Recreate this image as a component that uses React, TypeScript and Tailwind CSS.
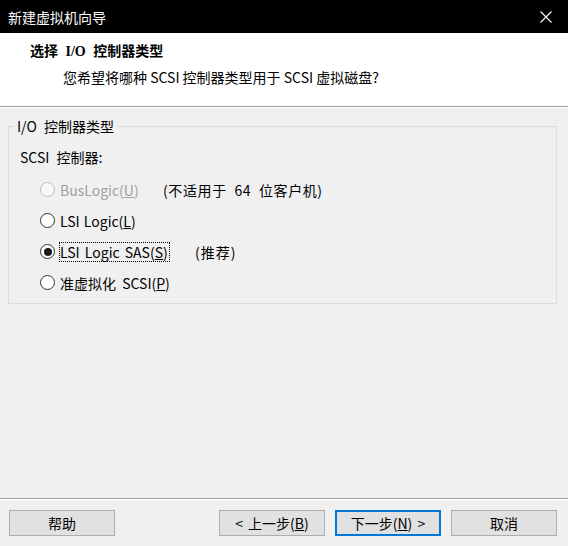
import React from "react";

const FONT = { fontFamily: '"Noto Sans CJK SC", sans-serif' };

function Radio({ checked, disabled }: { checked?: boolean; disabled?: boolean }) {
  return (
    <span
      className={
        "flex items-center justify-center w-[15px] h-[15px] rounded-full border shrink-0 " +
        (disabled ? "border-[#bcbcbc] bg-[#f7f7f7]" : "border-[#333333] bg-white")
      }
    >
      {checked && <span className="block w-[8px] h-[8px] rounded-full bg-[#1a1a1a]" />}
    </span>
  );
}

function Btn({ children, primary }: { children: React.ReactNode; primary?: boolean }) {
  return (
    <div
      className={
        "w-[106px] h-[26px] flex items-center justify-center bg-[#e1e1e1] text-[14px] leading-[20px] text-black [word-spacing:2px] " +
        (primary ? "border-2 border-[#0078d7]" : "border border-[#adadad]")
      }
    >
      {children}
    </div>
  );
}

export default function App() {
  return (
    <div className="w-[568px] h-[546px] flex flex-col bg-[#f0f0f0] overflow-hidden" style={FONT}>
      {/* title bar */}
      <div className="h-[33px] bg-black flex items-center pl-[8px] pr-[16px] shrink-0">
        <span className="text-white text-[14px] leading-[20px]">新建虚拟机向导</span>
        <svg className="ml-auto" width="12" height="12" viewBox="0 0 12 12">
          <path d="M0.5 0.5 L11.5 11.5 M11.5 0.5 L0.5 11.5" stroke="#ffffff" strokeWidth="1.1" />
        </svg>
      </div>

      {/* header */}
      <div className="h-[73px] bg-white shrink-0 pt-[9px]">
        <div
          className="pl-[30px] text-[14px] leading-[20px] font-bold text-black [word-spacing:4px]"
          style={{ fontFamily: '"Liberation Serif", "Noto Sans CJK SC", serif' }}
        >
          选择 I/O 控制器类型
        </div>
        <div className="pl-[63px] mt-[5px] text-[14px] leading-[20px] text-black">
          您希望将哪种 SCSI 控制器类型用于 SCSI 虚拟磁盘?
        </div>
      </div>
      <div className="h-[1px] bg-[#a0a0a0] shrink-0" />
      <div className="h-[1px] bg-white shrink-0" />

      {/* content */}
      <div className="flex-1">
        <fieldset className="ml-[8px] mr-[11px] mt-[8px] border border-[#dcdcdc] pb-[5px] [word-spacing:4px]">
          <legend className="ml-[5px] px-[3px] text-[14px] leading-[20px] text-black">I/O 控制器类型</legend>
          <div className="pl-[11px] mt-[11px] text-[14px] leading-[20px] text-black">SCSI 控制器:</div>
          <div className="mt-[7px] pl-[31px] flex flex-col text-[14px] leading-[18px]">
            <div className="h-[31px] flex items-center">
              <div className="w-[123px] flex items-center gap-[4px]">
                <Radio disabled />
                <span className="border border-transparent text-[#a0a0a0]">
                  BusLogic(<span className="underline">U</span>)
                </span>
              </div>
              <span className="text-black tracking-[0.6px]">(不适用于 64 位客户机)</span>
            </div>
            <div className="h-[31px] flex items-center">
              <div className="flex items-center gap-[4px]">
                <Radio />
                <span className="border border-transparent text-black [word-spacing:1px]">
                  LSI Logic(<span className="underline">L</span>)
                </span>
              </div>
            </div>
            <div className="h-[31px] flex items-center">
              <div className="w-[155px] flex items-center gap-[4px]">
                <Radio checked />
                <span className="border border-dotted border-black text-black h-[20px] flex items-center pr-[1px] [word-spacing:2px]">
                  LSI Logic SAS(<span className="underline">S</span>)
                </span>
              </div>
              <span className="text-black tracking-[1px]">(推荐)</span>
            </div>
            <div className="h-[31px] flex items-center">
              <div className="flex items-center gap-[4px]">
                <Radio />
                <span className="border border-transparent text-black [word-spacing:3px]">
                  准虚拟化 SCSI(<span className="underline">P</span>)
                </span>
              </div>
            </div>
          </div>
        </fieldset>
      </div>

      {/* footer */}
      <div className="h-[1px] bg-[#a0a0a0] shrink-0" />
      <div className="h-[1px] bg-white shrink-0" />
      <div className="h-[46px] shrink-0 flex items-center pl-[9px] pr-[11px]">
        <Btn>帮助</Btn>
        <div className="ml-auto flex gap-[10px]">
          <Btn>
            &lt; 上一步(<span className="underline">B</span>)
          </Btn>
          <Btn primary>
            下一步(<span className="underline">N</span>) &gt;
          </Btn>
          <Btn>取消</Btn>
        </div>
      </div>
    </div>
  );
}
